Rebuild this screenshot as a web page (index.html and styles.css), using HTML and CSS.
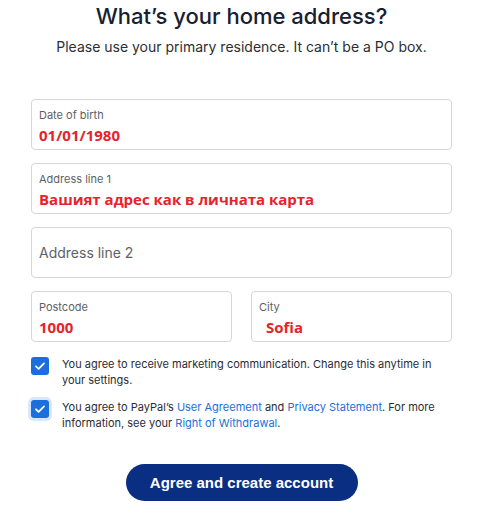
FILE: index.html
```html
<!DOCTYPE html>
<html lang="en">
<head>
  <meta charset="UTF-8" />
  <meta name="viewport" content="width=device-width, initial-scale=1.0"/>
  <title>What's your home address?</title>
  <link rel="stylesheet" href="styles.css">
</head>
<body>
  <div class="container">
    <h2>What’s your home address?</h2>
    <p class="sub">Please use your primary residence. It can’t be a PO box.</p>

    <form class="form">
      <div class="field">
        <span class="label">Date of birth</span>
        <span class="value">01/01/1980</span>
      </div>

      <div class="field">
        <span class="label">Address line 1</span>
        <span class="value">Вашият адрес как в личната карта</span>
      </div>

      <div class="field empty">
        <span class="placeholder">Address line 2</span>
      </div>

      <div class="row">
        <div class="field">
          <span class="label">Postcode</span>
          <span class="value">1000</span>
        </div>
        <div class="field">
          <span class="label">City</span>
          <span class="value city">Sofia</span>
        </div>
      </div>

      <div class="agree">
        <div class="check">
          <span class="box">
            <svg viewBox="0 0 18 18" width="18" height="18"><path d="M5 9.3l2.6 2.5L13 6.4" fill="none" stroke="#fff" stroke-width="1.8" stroke-linecap="round" stroke-linejoin="round"/></svg>
          </span>
          <p>You agree to receive marketing communication. Change this anytime in your settings.</p>
        </div>

        <div class="check">
          <span class="box focus">
            <svg viewBox="0 0 18 18" width="18" height="18"><path d="M5 9.3l2.6 2.5L13 6.4" fill="none" stroke="#fff" stroke-width="1.8" stroke-linecap="round" stroke-linejoin="round"/></svg>
          </span>
          <p>You agree to PayPal’s <a href="#">User Agreement</a> and <a href="#">Privacy Statement</a>. For more information, see your <a href="#">Right of Withdrawal</a>.</p>
        </div>
      </div>

      <button type="button">Agree and create account</button>
    </form>
  </div>
</body>
</html>
```

FILE: styles.css
```css
body {
  font-family: 'Inter', 'Liberation Sans', sans-serif;
  background: #fff;
  margin: 0;
  padding: 0;
  color: #1c1f2a;
}
.container {
  width: 421px;
  margin: 0 auto;
  padding-top: 1px;
}
h2 {
  text-align: center;
  font-size: 22px;
  font-weight: 500;
  line-height: 28px;
  color: #18202f;
  margin: 1px 0 0;
}
.sub {
  text-align: center;
  font-size: 14px;
  line-height: 18px;
  color: #2c2e33;
  margin: 8px 0 0;
}
.form {
  display: flex;
  flex-direction: column;
  gap: 13px;
  margin-top: 43px;
}
.field {
  height: 51px;
  box-sizing: border-box;
  border: 1.5px solid #d6d6d6;
  border-radius: 4px;
  padding: 8px 7px 0;
  display: flex;
  flex-direction: column;
}
.field.empty {
  justify-content: center;
  padding-top: 0;
}
.label {
  font-size: 11px;
  line-height: 14px;
  color: #5c5f66;
}
.value {
  font-family: 'Open Sans', 'Noto Sans', sans-serif;
  font-weight: 700;
  font-size: 15px;
  line-height: 20px;
  color: #e8222c;
  margin-top: 3px;
}
.value.city {
  padding-left: 7px;
}
.placeholder {
  font-size: 14px;
  color: #5f6167;
}
.row {
  display: grid;
  grid-template-columns: 1fr 1fr;
  gap: 19px;
}
.agree {
  display: flex;
  flex-direction: column;
  gap: 11px;
  margin-top: 1px;
}
.check {
  display: flex;
  align-items: flex-start;
  gap: 13px;
}
.box {
  flex: none;
  width: 18px;
  height: 18px;
  border-radius: 3px;
  background: #1b6fdd;
  display: flex;
  margin-top: 1px;
}
.box.focus {
  box-shadow: 0 0 0 3px #d8e7fb;
}
.check p {
  margin: 0;
  font-size: 11px;
  line-height: 16px;
  color: #2a2c33;
}
.check a {
  color: #1a6fd8;
  text-decoration: none;
}
button {
  align-self: center;
  width: 232px;
  height: 37px;
  margin-top: 20px;
  background: #0a2e82;
  color: #fff;
  border: none;
  border-radius: 19px;
  font-family: 'Liberation Sans', 'Inter', sans-serif;
  font-weight: 700;
  font-size: 15px;
  cursor: pointer;
}
```
